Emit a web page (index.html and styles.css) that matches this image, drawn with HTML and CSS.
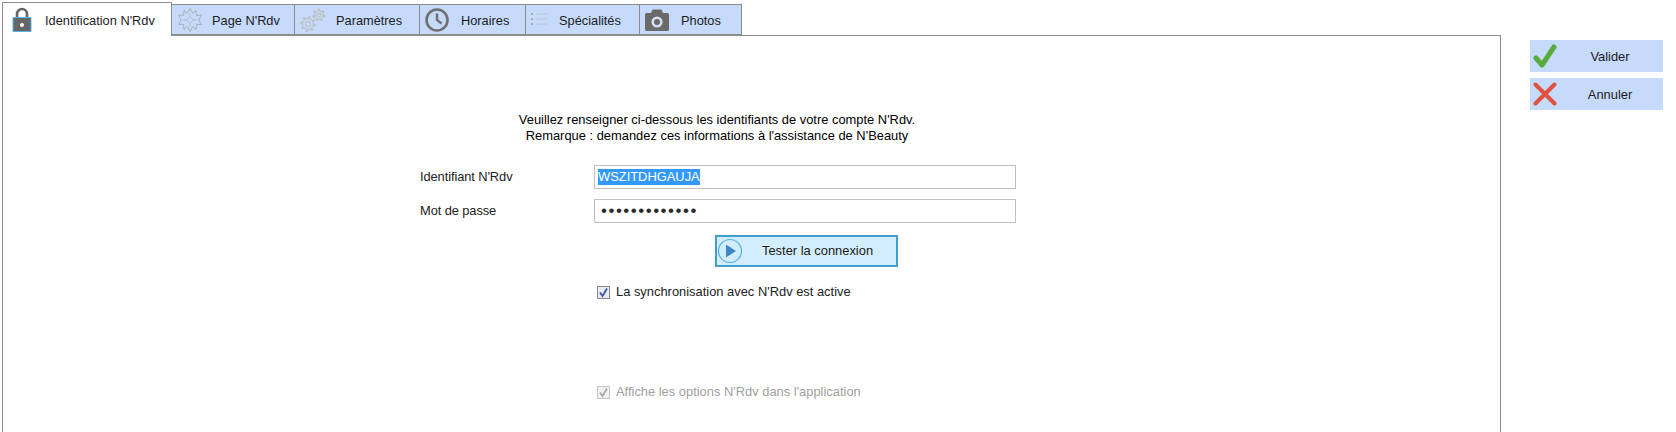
FILE: index.html
```html
<!DOCTYPE html>
<html lang="fr">
<head>
<meta charset="utf-8">
<title>Identification N'Rdv</title>
<link rel="stylesheet" href="styles.css">
</head>
<body>
<div class="app">
  <main class="main">
    <nav class="tabs">
      <div class="tab tab-active tab-id">
        <svg class="ico" width="20" height="26" viewBox="0 0 20 26"><path d="M5 11V7a5 5 0 0 1 10 0v4" fill="none" stroke="#666" stroke-width="2.6"/><path d="M1 10.500h18V24.500H1z" fill="#666" stroke="#57b4ea" stroke-width="1"/><circle cx="10" cy="18" r="2" fill="#fff"/></svg>
        <span>Identification N'Rdv</span>
      </div>
      <div class="tab tab-page">
        <svg class="ico" width="24" height="24" viewBox="0 0 24 24"><path d="M12 0.500l2.800 4.800L18 2.500l.5 5 5-.5-2.800 5 2.800 4.500-5-.2-.5 5.200-3.200-3-2.800 5-2.800-5-3.200 3-.5-5.200-5 .2L3.300 12 .5 7l5 .5.5-5 3.200 2.800z" fill="none" stroke="#a9aeb6" stroke-width="1"/><path d="M12 7.500l1.500 3 3 1.500-3 1.500-1.500 3-1.500-3-3-1.500 3-1.500zM12 5v2.500M12 16.500V19M5 12h2.500M16.500 12H19" fill="none" stroke="#b4b8c0" stroke-width=".8"/></svg>
        <span>Page N'Rdv</span>
      </div>
      <div class="tab tab-param">
        <svg class="ico" width="26" height="24" viewBox="0 0 26 24"><g fill="none" stroke="#bdbcb2" stroke-width="1"><circle cx="8" cy="16" r="2.500"/><circle cx="8" cy="16" r="5.500" stroke-width="1"/><circle cx="8" cy="16" r="7" stroke-width="1.600" stroke-dasharray="2.200 3.300"/><circle cx="19" cy="7" r="2"/><circle cx="19" cy="7" r="4.300" stroke-width="1"/><circle cx="19" cy="7" r="5.700" stroke-width="1.600" stroke-dasharray="2 3"/></g></svg>
        <span>Paramètres</span>
      </div>
      <div class="tab tab-hours">
        <svg class="ico" width="24" height="24" viewBox="0 0 24 24"><circle cx="12" cy="12" r="10.500" fill="none" stroke="#707070" stroke-width="2.600"/><path d="M12 5.500V12l4.500 3.500" fill="none" stroke="#707070" stroke-width="2.400"/></svg>
        <span>Horaires</span>
      </div>
      <div class="tab tab-spec">
        <svg class="ico" width="17" height="13" viewBox="0 0 17 13"><g fill="#a5adb8"><path d="M0 0h2v2H0zM0 5h2v2H0zM0 10h2v2H0z"/></g><g fill="#bcc5d2"><path d="M5 .500h12v1H5zM5 5.500h12v1H5zM5 10.500h12v1H5z"/></g></svg>
        <span>Spécialités</span>
      </div>
      <div class="tab tab-photo">
        <svg class="ico" width="24" height="22" viewBox="0 0 24 22"><path d="M1.500 4H6l1.500-3.500h9L18 4h4.500A1.500 1.500 0 0 1 24 5.500v15a1.500 1.500 0 0 1-1.500 1.500h-21A1.500 1.500 0 0 1 0 20.500v-15A1.500 1.500 0 0 1 1.500 4z" fill="#6a6a6a"/><circle cx="12" cy="13" r="4.300" fill="none" stroke="#d4dfee" stroke-width="2.600"/></svg>
        <span>Photos</span>
      </div>
    </nav>
    <section class="panel">
      <p class="intro">Veuillez renseigner ci-dessous les identifiants de votre compte N'Rdv.<br>Remarque : demandez ces informations à l'assistance de N'Beauty</p>
      <div class="fields">
        <label class="field-label">Identifiant N'Rdv</label>
        <div class="input"><span class="selected">WSZITDHGAUJA</span></div>
        <label class="field-label">Mot de passe</label>
        <div class="input dots">•••••••••••••</div>
      </div>
      <button class="test" type="button">
        <svg class="play" width="26" height="26" viewBox="0 0 26 26"><circle cx="13" cy="13" r="11.500" fill="none" stroke="#57b0ea" stroke-width="1.200"/><path d="M9 6.500L19 13 9 19.500z" fill="#3f86c6"/></svg>
        <span>Tester la connexion</span>
      </button>
      <div class="check check-sync"><span class="box"><svg width="11" height="11" viewBox="0 0 11 11"><path d="M2 5.500l2.500 3.500L9 1.500" fill="none" stroke="#3a5a9c" stroke-width="1.800"/></svg></span>La synchronisation avec N'Rdv est active</div>
      <div class="check check-opt"><span class="box"><svg width="11" height="11" viewBox="0 0 11 11"><path d="M2 5.500l2.500 3.500L9 1.500" fill="none" stroke="#a8a8a8" stroke-width="1.800"/></svg></span>Affiche les options N'Rdv dans l'application</div>
    </section>
  </main>
  <aside class="side">
    <button class="action" type="button">
      <svg width="24" height="24" viewBox="0 0 24 24"><path d="M3 14l6 7L21 3" fill="none" stroke="#5aab3c" stroke-width="5" stroke-linecap="round" stroke-linejoin="round"/></svg>
      <span>Valider</span>
    </button>
    <button class="action" type="button">
      <svg width="24" height="24" viewBox="0 0 24 24"><path d="M2.500 2.500l19 19M21.500 2.500l-19 19" fill="none" stroke="#e0523d" stroke-width="4" stroke-linecap="round"/></svg>
      <span>Annuler</span>
    </button>
  </aside>
</div>
</body>
</html>
```
FILE: styles.css
```css
* { box-sizing: border-box; }
html, body { margin: 0; height: 100%; overflow: hidden; background: #fff; }
body { font: 12.900px/16px "Liberation Sans", Arial, sans-serif; color: #1c1c1c; }
.app { display: flex; height: 432px; padding-left: 2px; }
.main { width: 1499px; display: flex; flex-direction: column; height: 470px; }
.tabs { display: flex; align-items: flex-end; height: 35px; }
.tab { position: relative; display: flex; align-items: center; height: 31px; background: #c6dafc; border: 1px solid #8c8c8c; border-left: 0; font-size: 12.800px; }
.tab span { display: block; position: relative; top: 1px; }
.ico { flex: none; display: block; }
.tab-active { background: #fff; border-left: 1px solid #8c8c8c; border-bottom: 0; width: 170px; padding-left: 9px; margin-bottom: -1px; height: 34px; z-index: 1; }
.tab-active span { margin-left: 13px; }
.tab-page { width: 123px; padding-left: 6px; }
.tab-page span { margin-left: 10px; }
.tab-param { width: 125px; padding-left: 5px; }
.tab-param span { margin-left: 10px; }
.tab-hours { width: 106px; padding-left: 5px; }
.tab-hours span { margin-left: 12px; }
.tab-spec { width: 114px; padding-left: 5px; }
.tab-spec span { margin-left: 11px; }
.tab-photo { width: 102px; padding-left: 5px; }
.tab-photo span { margin-left: 12px; }
.panel { flex: 1; border: 1px solid #8c8c8c; display: flex; flex-direction: column; align-items: flex-start; padding-top: 76px; }
.intro { margin: 0; width: 1428px; text-align: center; color: #000; }
.fields { display: grid; grid-template-columns: 174px 422px; grid-auto-rows: 24px; row-gap: 10px; margin: 21px 0 0 417px; align-items: center; }
.field-label { white-space: nowrap; letter-spacing: -.1px; }
.input { height: 24px; border: 1px solid #c0c0c0; padding: 3px; line-height: 16px; color: #222; }
.selected { display: inline-block; background: #3399ff; color: #fff; height: 16px; }
.dots { font-size: 17px; letter-spacing: 1.500px; padding-left: 6px; color: #2b2b2b; }
.test { display: flex; align-items: center; width: 183px; height: 32px; margin: 12px 0 0 712px; padding: 0; background: #d2edfb; border: 2px solid #3f9dd0; font: inherit; color: #1c1c1c; }
.test span { margin-left: 19px; }
.play { flex: none; }
.check { display: flex; align-items: center; height: 16px; margin-left: 594px; color: #222; }
.check-sync { margin-top: 17px; }
.check-opt { margin-top: 84px; color: #a0a0a0; }
.box { flex: none; width: 13px; height: 13px; margin-right: 6px; border: 1px solid #8a8a8a; background: #e6ecf6; display: flex; align-items: center; justify-content: center; }
.check-opt .box { border-color: #c4c4c4; background: #f2f2f2; }
.side { display: flex; flex-direction: column; gap: 6px; margin: 40px 0 0 29px; }
.action { display: flex; align-items: center; width: 133px; height: 32px; padding: 0 0 0 3px; background: #c6dafc; border: 0; font: inherit; color: #1c1c1c; }
.action span { flex: 1; text-align: center; position: relative; top: 1px; }
```
